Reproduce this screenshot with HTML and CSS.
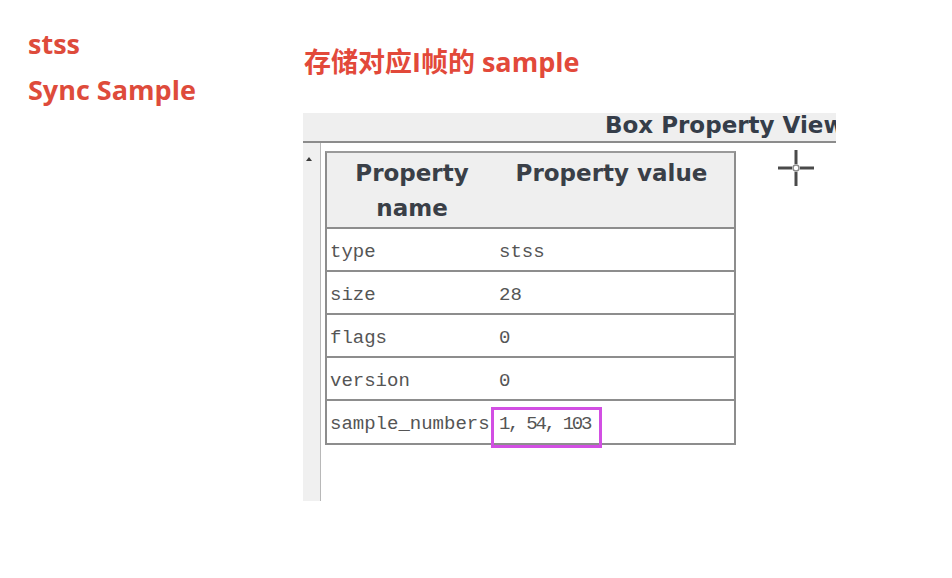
FILE: index.html
```html
<!DOCTYPE html>
<html lang="zh-CN">
<head>
<meta charset="utf-8">
<title>stss Sync Sample</title>
<link rel="stylesheet" href="styles.css">
</head>
<body>
<div class="page">
  <div class="notes">
    <div class="note">stss</div>
    <div class="note">Sync Sample</div>
  </div>
  <div class="main">
    <h1 class="heading">存储对应I帧的 sample</h1>
    <div class="panel">
      <div class="titlebar"><span class="title">Box Property View</span></div>
      <div class="body">
        <div class="gutter"><span class="arrow"></span></div>
        <div class="content">
          <div class="table">
            <div class="thead">
              <div class="th th-name">Property<br>name</div>
              <div class="th th-value">Property value</div>
            </div>
            <div class="row"><div class="cell name">type</div><div class="cell value">stss</div></div>
            <div class="row"><div class="cell name">size</div><div class="cell value">28</div></div>
            <div class="row"><div class="cell name">flags</div><div class="cell value">0</div></div>
            <div class="row"><div class="cell name">version</div><div class="cell value">0</div></div>
            <div class="row"><div class="cell name">sample_numbers</div><div class="cell value highlight-cell"><span class="nums">1, 54, 103</span><span class="mark"></span></div></div>
          </div>
          <svg class="cross" width="38" height="38" viewBox="0 0 38 38" aria-hidden="true">
            <g stroke="#4a4a4a" stroke-width="3" stroke-linecap="butt">
              <line x1="19" y1="1" x2="19" y2="15"/>
              <line x1="19" y1="23" x2="19" y2="37"/>
              <line x1="1" y1="19" x2="15" y2="19"/>
              <line x1="23" y1="19" x2="37" y2="19"/>
            </g>
            <circle cx="19" cy="19" r="3" fill="none" stroke="#8a8a8a" stroke-width="1.5"/>
          </svg>
        </div>
      </div>
    </div>
  </div>
</div>
</body>
</html>
```

FILE: styles.css
```css
html, body {
  margin: 0;
  padding: 0;
  background: #ffffff;
}

.page {
  display: flex;
  width: 952px;
  height: 578px;
  overflow: hidden;
}

.notes {
  width: 275px;
  padding: 26px 0 0 28px;
  box-sizing: border-box;
  display: flex;
  flex-direction: column;
  gap: 10px;
}

.note {
  font-family: "Open Sans", "Noto Sans CJK SC", sans-serif;
  font-weight: 700;
  font-size: 27px;
  line-height: 36px;
  color: #de4b3b;
}

.main {
  width: 560px;
  padding-top: 44px;
  display: flex;
  flex-direction: column;
}

.heading {
  margin: 0 0 0 29px;
  font-family: "Open Sans", "Noto Sans CJK SC", sans-serif;
  font-weight: 700;
  font-size: 27px;
  line-height: 36px;
  color: #e2493a;
}

.panel {
  margin-top: 33px;
  margin-left: 28px;
  width: 533px;
  display: flex;
  flex-direction: column;
}

.titlebar {
  height: 28px;
  background: #efefef;
  border-bottom: 2px solid #8c8c8c;
  overflow: hidden;
  white-space: nowrap;
  padding-left: 302px;
}

.title {
  font-family: "DejaVu Sans", sans-serif;
  font-weight: 700;
  font-size: 23px;
  line-height: 24px;
  color: #353d49;
  display: inline-block;
  padding-top: 0;
}

.body {
  display: flex;
  height: 358px;
}

.gutter {
  width: 17px;
  background: #f0f0f0;
  border-right: 1px solid #b8b8b8;
  position: relative;
}

.arrow {
  display: block;
  margin: 14px 0 0 3px;
  width: 0;
  height: 0;
  border-left: 3px solid transparent;
  border-right: 3px solid transparent;
  border-bottom: 4px solid #3c3c3c;
}

.content {
  flex: 1;
  display: flex;
  align-items: flex-start;
  padding: 8px 0 0 4px;
  gap: 40px;
}

.table {
  width: 411px;
  box-sizing: border-box;
  border: 2px solid #8d8d8d;
  border-top-color: #9a9a9a;
}

.thead {
  display: grid;
  grid-template-columns: 170px 1fr;
  background: #efefef;
  height: 74px;
  border-bottom: 2px solid #8d8d8d;
}

.th {
  font-family: "DejaVu Sans", sans-serif;
  font-weight: 700;
  font-size: 23px;
  line-height: 35px;
  color: #3a3f47;
  text-align: center;
  padding-top: 3px;
}

.th-name {
  padding-left: 0;
}

.th-value {
  padding-right: 8px;
}

.row {
  display: grid;
  grid-template-columns: 166px 1fr;
  height: 41px;
  border-bottom: 2px solid #8d8d8d;
  background: #ffffff;
}

.row:last-child {
  border-bottom: none;
  height: 42px;
}

.cell {
  font-family: "Liberation Mono", "DejaVu Sans Mono", monospace;
  font-size: 19px;
  line-height: 41px;
  padding-top: 3px;
  box-sizing: border-box;
  color: #555555;
  white-space: nowrap;
}

.name {
  padding-left: 3px;
  overflow: visible;
}

.value {
  padding-left: 6px;
}

.highlight-cell {
  position: relative;
}

.nums {
  letter-spacing: -2.3px;
}

.mark {
  position: absolute;
  left: -2px;
  top: 6px;
  width: 105px;
  height: 35px;
  border: 3px solid #d24fe3;
}

.cross {
  margin-top: -2px;
  margin-left: 1px;
}
```
